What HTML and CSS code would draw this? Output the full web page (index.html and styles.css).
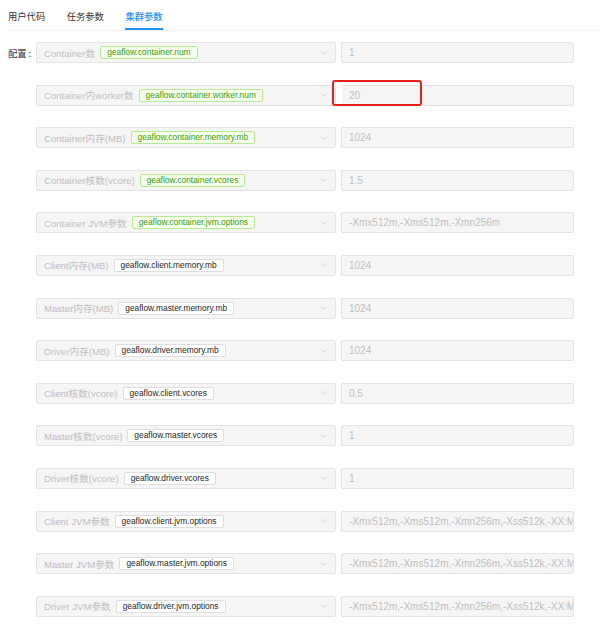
FILE: index.html
```html
<!DOCTYPE html>
<html lang="zh">
<head>
<meta charset="utf-8">
<link rel="stylesheet" href="styles.css">
</head>
<body>
<div class="tabs">
  <div class="tab">用户代码</div>
  <div class="tab">任务参数</div>
  <div class="tab active">集群参数</div>
</div>
<div class="form">
  <div class="row">
    <div class="label">配置<span class="colon">:</span></div>
    <div class="select"><span class="name">Container数</span><span class="tag green">geaflow.container.num</span><svg class="arrow" viewBox="0 0 8 5"><path d="M0.5 0.5 L4 4 L7.5 0.5"/></svg></div>
    <div class="input">1</div>
  </div>
  <div class="row">
    <div class="label"></div>
    <div class="select"><span class="name">Container内worker数</span><span class="tag green">geaflow.container.worker.num</span><svg class="arrow" viewBox="0 0 8 5"><path d="M0.5 0.5 L4 4 L7.5 0.5"/></svg></div>
    <div class="input focus">20<div class="highlight"></div></div>
  </div>
  <div class="row">
    <div class="label"></div>
    <div class="select"><span class="name">Container内存(MB)</span><span class="tag green">geaflow.container.memory.mb</span><svg class="arrow" viewBox="0 0 8 5"><path d="M0.5 0.5 L4 4 L7.5 0.5"/></svg></div>
    <div class="input">1024</div>
  </div>
  <div class="row">
    <div class="label"></div>
    <div class="select"><span class="name">Container核数(vcore)</span><span class="tag green">geaflow.container.vcores</span><svg class="arrow" viewBox="0 0 8 5"><path d="M0.5 0.5 L4 4 L7.5 0.5"/></svg></div>
    <div class="input">1.5</div>
  </div>
  <div class="row">
    <div class="label"></div>
    <div class="select"><span class="name">Container JVM参数</span><span class="tag green">geaflow.container.jvm.options</span><svg class="arrow" viewBox="0 0 8 5"><path d="M0.5 0.5 L4 4 L7.5 0.5"/></svg></div>
    <div class="input">-Xmx512m,-Xms512m,-Xmn256m</div>
  </div>
  <div class="row">
    <div class="label"></div>
    <div class="select"><span class="name">Client内存(MB)</span><span class="tag">geaflow.client.memory.mb</span><svg class="arrow" viewBox="0 0 8 5"><path d="M0.5 0.5 L4 4 L7.5 0.5"/></svg></div>
    <div class="input">1024</div>
  </div>
  <div class="row">
    <div class="label"></div>
    <div class="select"><span class="name">Master内存(MB)</span><span class="tag">geaflow.master.memory.mb</span><svg class="arrow" viewBox="0 0 8 5"><path d="M0.5 0.5 L4 4 L7.5 0.5"/></svg></div>
    <div class="input">1024</div>
  </div>
  <div class="row">
    <div class="label"></div>
    <div class="select"><span class="name">Driver内存(MB)</span><span class="tag">geaflow.driver.memory.mb</span><svg class="arrow" viewBox="0 0 8 5"><path d="M0.5 0.5 L4 4 L7.5 0.5"/></svg></div>
    <div class="input">1024</div>
  </div>
  <div class="row">
    <div class="label"></div>
    <div class="select"><span class="name">Client核数(vcore)</span><span class="tag">geaflow.client.vcores</span><svg class="arrow" viewBox="0 0 8 5"><path d="M0.5 0.5 L4 4 L7.5 0.5"/></svg></div>
    <div class="input">0.5</div>
  </div>
  <div class="row">
    <div class="label"></div>
    <div class="select"><span class="name">Master核数(vcore)</span><span class="tag">geaflow.master.vcores</span><svg class="arrow" viewBox="0 0 8 5"><path d="M0.5 0.5 L4 4 L7.5 0.5"/></svg></div>
    <div class="input">1</div>
  </div>
  <div class="row">
    <div class="label"></div>
    <div class="select"><span class="name">Driver核数(vcore)</span><span class="tag">geaflow.driver.vcores</span><svg class="arrow" viewBox="0 0 8 5"><path d="M0.5 0.5 L4 4 L7.5 0.5"/></svg></div>
    <div class="input">1</div>
  </div>
  <div class="row">
    <div class="label"></div>
    <div class="select"><span class="name">Client JVM参数</span><span class="tag">geaflow.client.jvm.options</span><svg class="arrow" viewBox="0 0 8 5"><path d="M0.5 0.5 L4 4 L7.5 0.5"/></svg></div>
    <div class="input">-Xmx512m,-Xms512m,-Xmn256m,-Xss512k,-XX:M</div>
  </div>
  <div class="row">
    <div class="label"></div>
    <div class="select"><span class="name">Master JVM参数</span><span class="tag">geaflow.master.jvm.options</span><svg class="arrow" viewBox="0 0 8 5"><path d="M0.5 0.5 L4 4 L7.5 0.5"/></svg></div>
    <div class="input">-Xmx512m,-Xms512m,-Xmn256m,-Xss512k,-XX:M</div>
  </div>
  <div class="row">
    <div class="label"></div>
    <div class="select"><span class="name">Driver JVM参数</span><span class="tag">geaflow.driver.jvm.options</span><svg class="arrow" viewBox="0 0 8 5"><path d="M0.5 0.5 L4 4 L7.5 0.5"/></svg></div>
    <div class="input">-Xmx512m,-Xms512m,-Xmn256m,-Xss512k,-XX:M</div>
  </div>
</div>
</body>
</html>
```

FILE: styles.css
```css
* { box-sizing: border-box; }
html, body { margin: 0; padding: 0; background: #fff; }
body {
  font-family: "Liberation Sans", "Noto Sans CJK SC", sans-serif;
  color: #333;
}
.tabs {
  margin-left: 8px;
  height: 31px;
  display: flex;
  gap: 21.5px;
  border-bottom: 1px solid #f0f0f0;
}
.tab {
  font-family: "Noto Sans CJK SC", sans-serif;
  font-size: 9.3px;
  color: #333;
  line-height: 30px;
  height: 30px;
  padding-top: 1px;
  border-bottom: 2px solid transparent;
}
.tab.active {
  color: #1890ff;
  border-bottom-color: #1890ff;
  font-weight: 500;
}
.form {
  padding-top: 11px;
  display: flex;
  flex-direction: column;
  gap: 21.6px;
}
.row {
  display: flex;
  align-items: center;
  height: 21px;
}
.label {
  width: 36px;
  padding-left: 8px;
  font-family: "Noto Sans CJK SC", sans-serif;
  font-size: 9.3px;
  color: #333;
  white-space: nowrap;
}
.colon { margin-left: 2px; }
.select {
  width: 300px;
  height: 21px;
  background: #f5f5f5;
  border: 1px solid #e3e3e3;
  border-radius: 2px;
  display: flex;
  align-items: center;
  padding-left: 7px;
  position: relative;
}
.name {
  font-size: 9.6px;
  color: #bfbfbf;
  white-space: nowrap;
}
.tag {
  margin-left: 5px;
  height: 13px;
  line-height: 11px;
  padding: 0 6px;
  font-size: 8.4px;
  color: #262626;
  background: #fff;
  border: 1px solid #dedede;
  border-radius: 2px;
  white-space: nowrap;
}
.tag.green {
  color: #389e0d;
  background: #f6ffed;
  border-color: #b7eb8f;
}
.arrow {
  width: 7px;
  height: 4px;
  margin-left: auto;
  margin-right: 8px;
  fill: none;
  stroke: #c4c4c4;
  stroke-width: 0.9;
}
.input {
  margin-left: 5px;
  width: 233px;
  height: 21px;
  background: #f5f5f5;
  border: 1px solid #e3e3e3;
  border-radius: 2px;
  padding-left: 7px;
  font-size: 10px;
  line-height: 19px;
  color: #bfbfbf;
  white-space: nowrap;
  overflow: hidden;
  position: relative;
}
.input.focus { overflow: visible; border-left-color: #fff; }
.highlight {
  position: absolute;
  left: -10px;
  top: -6px;
  width: 90px;
  height: 26px;
  border: 2px solid #e5231b;
  border-radius: 3px;
}
```
